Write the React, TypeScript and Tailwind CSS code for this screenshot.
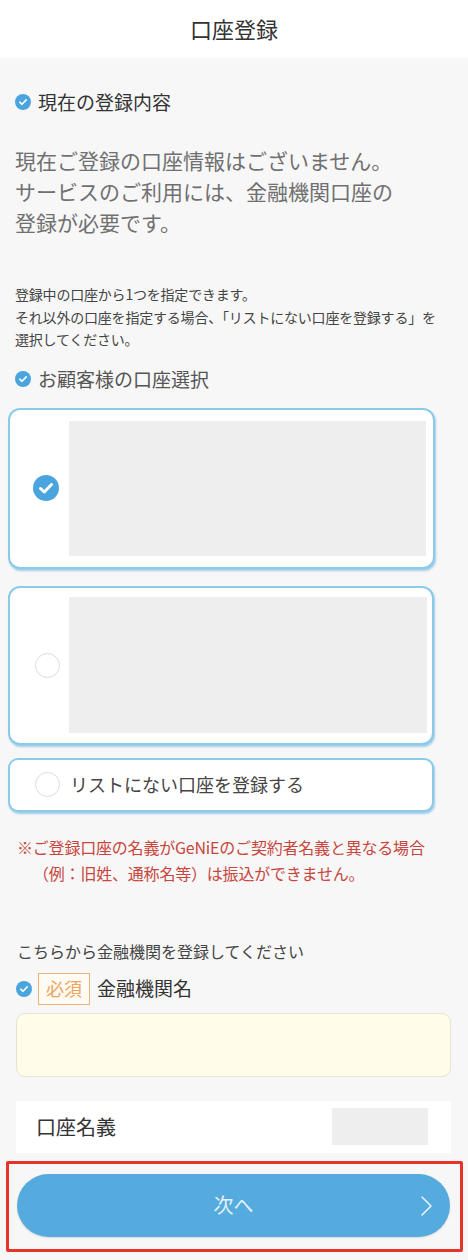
import React from "react";

const FONT = { fontFamily: '"Noto Sans CJK JP", "Noto Sans", sans-serif' };

function SmallCheck() {
  return (
    <svg width="16" height="16" viewBox="0 0 16 16" className="shrink-0">
      <circle cx="8" cy="8" r="8" fill="#4aa4de" />
      <path d="M4.8 8.2 L7 10.3 L11.2 5.9" fill="none" stroke="#fff" strokeWidth="1.6" strokeLinecap="round" strokeLinejoin="round" />
    </svg>
  );
}

function BigCheck() {
  return (
    <svg width="26" height="26" viewBox="0 0 26 26" className="shrink-0">
      <circle cx="13" cy="13" r="13" fill="#4aa4de" />
      <path d="M7.5 13.5 L11.3 17 L18.5 9.5" fill="none" stroke="#fff" strokeWidth="3" strokeLinecap="round" strokeLinejoin="round" />
    </svg>
  );
}

function Radio() {
  return <div className="w-[25px] h-[25px] rounded-full border-[1.5px] border-[#dcdcdc] bg-white shrink-0" />;
}

export default function App() {
  return (
    <div style={FONT} className="w-[468px] min-h-[1260px] bg-[#f7f7f7] flex flex-col">
      <div className="h-[58px] bg-white flex items-center justify-center text-[22px] text-[#333] pb-[2px]">
        口座登録
      </div>

      <div className="mt-[31px] px-[15px] flex items-center gap-[7px] h-[26px]">
        <SmallCheck />
        <span className="text-[19px] text-[#333] leading-[26px]">現在の登録内容</span>
      </div>

      <div className="mt-[30px] px-[15px] text-[21px] leading-[31px] text-[#707070]">
        現在ご登録の口座情報はございません。
        <br />
        サービスのご利用には、金融機関口座の
        <br />
        登録が必要です。
      </div>

      <div className="mt-[45px] px-[15px] text-[14px] leading-[22.5px] text-[#444] tracking-[-0.2px]">
        登録中の口座から1つを指定できます。
        <br />
        それ以外の口座を指定する場合、「リストにない口座を登録する」を
        <br />
        選択してください。
      </div>

      <div className="mt-[15px] px-[15px] flex items-center gap-[7px] h-[26px]">
        <SmallCheck />
        <span className="text-[19px] text-[#555] leading-[26px]">お顧客様の口座選択</span>
      </div>

      <div className="mt-[16px] ml-[8px] w-[427px] h-[161px] rounded-[12px] border-2 border-[#8ccaea] bg-white shadow-[1px_2px_2px_rgba(90,170,220,0.55)] flex items-center pl-[23px] pr-[7px]">
        <BigCheck />
        <div className="ml-[10px] flex-1 h-[135px] bg-[#eeeeee]" />
      </div>

      <div className="mt-[17px] ml-[8px] w-[426px] h-[159px] rounded-[12px] border-2 border-[#8ccaea] bg-white shadow-[1px_2px_2px_rgba(90,170,220,0.55)] flex items-center pl-[25px] pr-[5px]">
        <Radio />
        <div className="ml-[9px] flex-1 h-[136px] bg-[#eeeeee]" />
      </div>

      <div className="mt-[13px] ml-[8px] w-[426px] h-[54px] rounded-[10px] border-2 border-[#8ccaea] bg-white shadow-[1px_2px_2px_rgba(90,170,220,0.55)] flex items-center pl-[25px]">
        <Radio />
        <span className="ml-[10px] text-[18px] text-[#444]">リストにない口座を登録する</span>
      </div>

      <div className="mt-[22px] pl-[33px] pr-[10px] -indent-[16px] text-[16px] leading-[26px] text-[#c8463d] tracking-[-0.2px]">
        ※ご登録口座の名義がGeNiEのご契約者名義と異なる場合（例：旧姓、通称名等）は振込ができません。
      </div>

      <div className="mt-[53px] px-[17px] text-[16px] leading-[24px] text-[#444]">
        こちらから金融機関を登録してください
      </div>

      <div className="mt-[10px] pl-[16px] flex items-center h-[32px]">
        <SmallCheck />
        <div className="ml-[6px] w-[52px] h-[32px] border border-[#eab27a] bg-[#fffaf2] flex items-center justify-center text-[18px] text-[#eca45f]">
          必須
        </div>
        <span className="ml-[7px] text-[19px] text-[#333]">金融機関名</span>
      </div>

      <div className="mt-[8px] ml-[16px] w-[435px] h-[64px] rounded-[9px] border border-[#e6e4d2] bg-[#fffde9]" />

      <div className="mt-[24px] ml-[16px] w-[435px] h-[52px] bg-white flex items-center pl-[20px] pr-[23px]">
        <span className="text-[20px] text-[#333]">口座名義</span>
        <div className="ml-auto w-[96px] h-[37px] bg-[#eeeeee]" />
      </div>

      <div className="mt-[8px] ml-[6px] w-[457px] h-[91px] border-[3px] border-[#e8322a] rounded-[2px] pt-[10px] pl-[8px]">
        <div className="relative w-[433px] h-[63px] rounded-full bg-[#55abdd] flex items-center justify-center shadow-[0_1px_2px_rgba(0,0,0,0.12)]">
          <span className="text-[20px] text-[#e4f2fb]">次へ</span>
          <svg width="14" height="22" viewBox="0 0 14 22" className="absolute right-[16px] top-[21px]">
            <path d="M2 2 L11 11 L2 20" fill="none" stroke="#e4f2fb" strokeWidth="1.6" strokeLinecap="round" strokeLinejoin="round" />
          </svg>
        </div>
      </div>
    </div>
  );
}
